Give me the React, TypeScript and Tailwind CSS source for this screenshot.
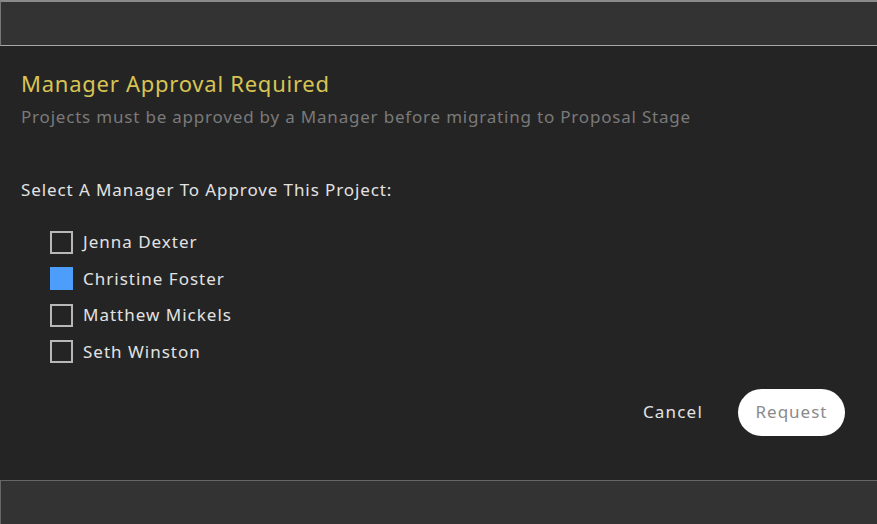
import { useState } from 'react';

const managers = ['Jenna Dexter', 'Christine Foster', 'Matthew Mickels', 'Seth Winston'];

export default function App() {
  const [selected, setSelected] = useState('Christine Foster');

  return (
    <div
      className="w-[877px] h-[524px] bg-[#242424] flex flex-col overflow-hidden"
      style={{ fontFamily: '"Noto Sans", "Open Sans", sans-serif' }}
    >
      {/* top bar */}
      <div className="h-[46px] shrink-0 bg-[#333333] border-t-2 border-l border-b border-t-[#8a8a8a] border-l-[#777] border-b-[#a8a8a8]" />

      {/* dialog body */}
      <div className="flex-1 flex flex-col pl-[21px] pr-[32px] pt-[22px]">
        <h1 className="text-[22px] leading-[30px] text-[#d8c454] tracking-[0.75px]">Manager Approval Required</h1>
        <p className="text-[17px] leading-[24px] text-[#7a7a7a] tracking-[0.8px] mt-[7px]">
          Projects must be approved by a Manager before migrating to Proposal Stage
        </p>

        <p className="text-[17px] leading-[24px] text-[#e2e2e2] tracking-[0.9px] mt-[49px]">
          Select A Manager To Approve This Project:
        </p>

        <ul className="mt-[29px] pl-[29px] flex flex-col gap-[14.5px]">
          {managers.map((m) => {
            const on = selected === m;
            return (
              <li key={m} className="flex items-center gap-[10px] h-[22px] cursor-pointer" onClick={() => setSelected(m)}>
                <span
                  className={`w-[23px] h-[23px] shrink-0 ${
                    on ? 'bg-[#4d9dfb] border-2 border-[#4d9dfb]' : 'border-2 border-[#b8b8b8]'
                  }`}
                />
                <span className="text-[17px] leading-[22px] text-[#e2e2e2] tracking-[1px]">{m}</span>
              </li>
            );
          })}
        </ul>

        <div className="flex justify-end items-center gap-[35px] mt-[26px]">
          <button className="text-[17px] text-[#e2e2e2] tracking-[1.2px]">Cancel</button>
          <button className="w-[107px] h-[47px] rounded-full bg-white text-[17px] text-[#8a8a8a] tracking-[1px]">
            Request
          </button>
        </div>
      </div>

      {/* bottom bar */}
      <div className="h-[44px] shrink-0 bg-[#333333] border-t border-l border-[#666]" />
    </div>
  );
}
